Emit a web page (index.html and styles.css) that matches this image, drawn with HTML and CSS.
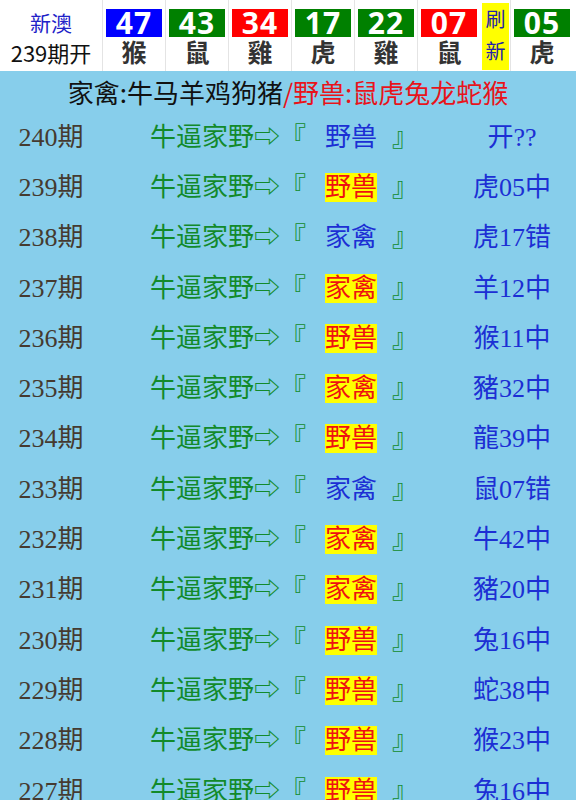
FILE: index.html
```html
<!DOCTYPE html>
<html lang="zh-CN">
<head>
    <meta charset="UTF-8">
    <meta name="viewport" content="width=device-width, initial-scale=1.0">
    <title>新澳 家禽野兽</title>
    <link rel="stylesheet" href="styles.css">
</head>
<body>
    <div class="header">
        <div class="issue">
            <div class="issue-name">新澳</div>
            <div class="issue-no">239期开</div>
        </div>
        <div class="ball"><div class="num blue">47</div><div class="zodiac">猴</div></div>
        <div class="ball"><div class="num green">43</div><div class="zodiac">鼠</div></div>
        <div class="ball"><div class="num red">34</div><div class="zodiac">雞</div></div>
        <div class="ball"><div class="num green">17</div><div class="zodiac">虎</div></div>
        <div class="ball"><div class="num green">22</div><div class="zodiac">雞</div></div>
        <div class="ball"><div class="num red">07</div><div class="zodiac">鼠</div></div>
        <div class="refresh">刷<br>新</div>
        <div class="ball"><div class="num green">05</div><div class="zodiac">虎</div></div>
    </div>

    <div class="board">
        <div class="title">家禽:牛马羊鸡狗猪<span class="wild">/野兽:鼠虎兔龙蛇猴</span></div>

        <div class="row">
            <div class="period">240期</div>
            <div class="pick">牛逼家野⇨『<span class="guess">野兽</span>』</div>
            <div class="result">开??</div>
        </div>
        <div class="row">
            <div class="period">239期</div>
            <div class="pick">牛逼家野⇨『<span class="guess hit">野兽</span>』</div>
            <div class="result">虎05中</div>
        </div>
        <div class="row">
            <div class="period">238期</div>
            <div class="pick">牛逼家野⇨『<span class="guess">家禽</span>』</div>
            <div class="result">虎17错</div>
        </div>
        <div class="row">
            <div class="period">237期</div>
            <div class="pick">牛逼家野⇨『<span class="guess hit">家禽</span>』</div>
            <div class="result">羊12中</div>
        </div>
        <div class="row">
            <div class="period">236期</div>
            <div class="pick">牛逼家野⇨『<span class="guess hit">野兽</span>』</div>
            <div class="result">猴11中</div>
        </div>
        <div class="row">
            <div class="period">235期</div>
            <div class="pick">牛逼家野⇨『<span class="guess hit">家禽</span>』</div>
            <div class="result">豬32中</div>
        </div>
        <div class="row">
            <div class="period">234期</div>
            <div class="pick">牛逼家野⇨『<span class="guess hit">野兽</span>』</div>
            <div class="result">龍39中</div>
        </div>
        <div class="row">
            <div class="period">233期</div>
            <div class="pick">牛逼家野⇨『<span class="guess">家禽</span>』</div>
            <div class="result">鼠07错</div>
        </div>
        <div class="row">
            <div class="period">232期</div>
            <div class="pick">牛逼家野⇨『<span class="guess hit">家禽</span>』</div>
            <div class="result">牛42中</div>
        </div>
        <div class="row">
            <div class="period">231期</div>
            <div class="pick">牛逼家野⇨『<span class="guess hit">家禽</span>』</div>
            <div class="result">豬20中</div>
        </div>
        <div class="row">
            <div class="period">230期</div>
            <div class="pick">牛逼家野⇨『<span class="guess hit">野兽</span>』</div>
            <div class="result">兔16中</div>
        </div>
        <div class="row">
            <div class="period">229期</div>
            <div class="pick">牛逼家野⇨『<span class="guess hit">野兽</span>』</div>
            <div class="result">蛇38中</div>
        </div>
        <div class="row">
            <div class="period">228期</div>
            <div class="pick">牛逼家野⇨『<span class="guess hit">野兽</span>』</div>
            <div class="result">猴23中</div>
        </div>
        <div class="row">
            <div class="period">227期</div>
            <div class="pick">牛逼家野⇨『<span class="guess hit">野兽</span>』</div>
            <div class="result">兔16中</div>
        </div>
    </div>
</body>
</html>
```

FILE: styles.css
```css
body {
    margin: 0;
    background-color: #fff;
    font-family: "Noto Sans CJK SC", sans-serif;
    overflow: hidden;
}

/* top strip with the drawn numbers */
.header {
    display: flex;
    height: 71px;
    background-color: #fff;
}

.issue {
    width: 102px;
    text-align: center;
    line-height: 30px;
    padding-top: 7px;
}

.issue-name {
    color: #2222c8;
    font-size: 21px;
}

.issue-no {
    color: #111;
    font-size: 22px;
}

.ball {
    width: 56px;
    padding: 9px 3px 0;
    border-left: 1px solid #e4e4e4;
    text-align: center;
}

.num {
    height: 28px;
    line-height: 28px;
    color: #fff;
    font-family: "Open Sans", "Noto Sans", sans-serif;
    font-weight: bold;
    font-size: 30px;
    letter-spacing: 1px;
}

.num.blue { background-color: #0000ff; }
.num.green { background-color: #008000; }
.num.red { background-color: #ff0000; }

.zodiac {
    font-size: 25px;
    line-height: 29px;
    font-weight: bold;
    color: #333;
}

.refresh {
    width: 27px;
    margin: 3px 1px 1px 2px;
    background-color: #ffff00;
    color: #2222aa;
    font-size: 20px;
    line-height: 32px;
    text-align: center;
}

/* sky blue board */
.board {
    background-color: #87ceeb;
    padding-bottom: 20px;
}

.title {
    height: 38px;
    line-height: 42px;
    text-align: center;
    font-size: 26px;
    color: #111;
}

.wild {
    color: #e8141b;
}

.row {
    display: grid;
    grid-template-columns: 102px 346px 1fr;
    align-items: center;
    height: 50.3px;
    font-family: "Liberation Serif", "Noto Sans CJK SC", serif;
    font-size: 26px;
}

.period {
    text-align: center;
    color: #453a30;
}

.pick {
    padding-left: 48px;
    color: #128a2a;
    white-space: nowrap;
}

.guess {
    margin: 0 15px 0 19px;
    color: #1c2fd4;
}

.guess.hit {
    color: #ee1111;
    background-color: #ffff00;
}

.result {
    text-align: center;
    color: #1c2fd4;
}
```
